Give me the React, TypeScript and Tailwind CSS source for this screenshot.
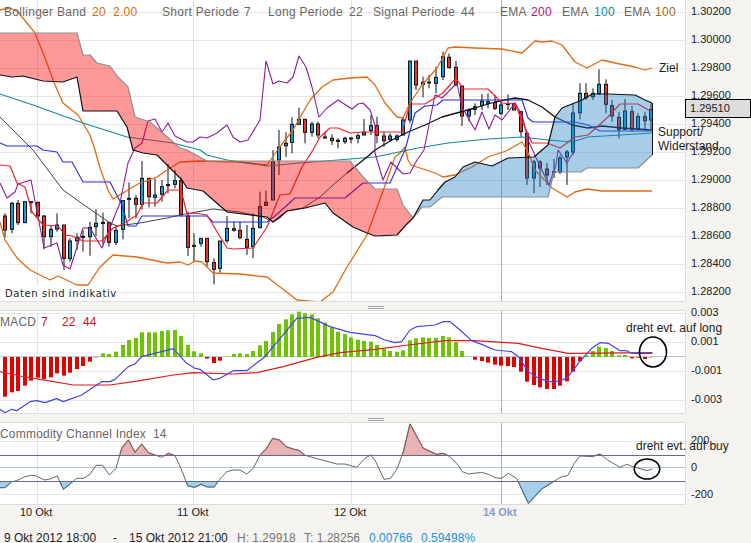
import React from "react";

type P = number[];
// points are read in 3x crops: convert to page pixels
const z = (pts: P, ox: number, oy: number): P => {
  const r: P = [];
  for (let i = 0; i < pts.length; i += 2) r.push(ox + pts[i] / 3, oy + pts[i + 1] / 3);
  return r;
};
const str = (p: P) => {
  const r: string[] = [];
  for (let i = 0; i < p.length; i += 2) r.push(`${p[i]},${p[i + 1]}`);
  return r.join(" ");
};

const upper: P = [0,10,10,8,18,12,35,33,45,58,55,85,63,103,78,115,90,135,95,150,100,168,108,190,113,199,123,193,138,184,157,177,170,168,180,162,200,161,240,162,267,165,279,148,293,130,310,100,322,87,333,80,350,78,367,77,375,85,385,103,397,117,403,118,410,103,422,85,437,68,448,48,455,47,475,48,502,49,522,53,535,41,542,42,552,41,562,45,575,62,587,68,602,60,615,63,635,67,645,70,652,68];
const lower: P = [0,222,5,240,17,258,30,270,50,280,58,276,77,285,88,285,100,267,113,255,137,257,167,263,180,262,188,265,195,261,202,262,213,273,240,274,267,277,297,300,320,302,333,292,347,267,367,235,375,213,387,180,395,157,400,153,405,147,408,160,411,165,435,173,443,177,455,175,472,167,488,157,503,152,508,150,522,142,527,150,535,170,552,188,567,197,575,192,587,189,602,191,652,191];
const emaLeft: P = [0,117,33,150,63,190,87,207,110,223,117,226,140,223,167,218,180,215,213,209,240,212,263,217,273,222,280,218,287,211,303,208,320,197,333,185,347,173];
const emaRight: P = [347,173,367,157,375,150,392,140,408,132,425,125,442,117,475,108,495,102,515,98,528,100,542,107,555,117,572,125,588,128,602,126,622,128,652,130];
const teal: P = [0,94,33,105,83,123,127,137,173,143,200,150,207,155,227,160,267,166,300,163,350,159,375,157,418,148,448,143,488,139,522,137,548,140,572,142,588,137,652,133];
const blue: P = [0,143,7,146,37,146,43,150,57,152,63,162,72,162,83,182,110,182,122,205,128,226,136,226,142,216,207,216,213,222,267,222,275,216,295,198,345,198,363,183,390,183,405,150,415,113,425,106,437,105,443,100,522,100,528,118,533,122,575,122,588,125,600,131,652,131];
const purple: P = [0,183,7,198,15,192,18,184,31,180,44,248,57,243,63,265,70,269,83,228,90,228,102,248,115,215,120,203,128,163,135,148,142,143,148,121,155,119,162,132,168,123,175,136,187,142,193,142,200,137,207,138,217,133,227,125,233,137,240,142,248,140,260,120,266,61,273,84,279,81,287,83,293,77,299,56,306,67,312,87,319,117,327,108,338,100,352,109,358,104,363,103,370,110,375,125,375,153,383,180,391,162,403,174,410,173,417,160,424,150,435,95,442,98,457,83,462,107,475,130,482,112,489,129,495,115,502,120,515,103,522,115,528,140,538,162,549,185,556,165,558,150,567,163,575,150];
const red: P = [0,165,10,166,17,183,25,187,32,212,43,225,58,226,65,235,72,236,83,241,102,241,113,228,123,224,137,215,143,203,157,203,168,190,181,190,187,214,195,213,207,215,227,248,233,249,253,248,267,227,280,195,290,194,302,167,313,150,320,137,330,128,338,128,350,133,363,132,402,132,410,104,425,104,443,93,456,78,463,89,488,89,502,103,515,104,523,123,532,143,547,143,560,148,575,137,588,135,608,117,620,104,638,104,652,112];

const cloudRed: P = [0,33,77,33,83,55,90,55,97,63,110,66,118,77,128,87,135,117,150,122,165,135,180,148,187,150,207,161,350,161,363,177,375,189,397,189,403,205,413,218];
const cloudRedBot: P = [0,75,12,77,23,76,43,81,63,82,77,77,83,111,117,111,127,127,133,150,143,153,157,155,167,165,182,180,187,188,203,191,227,212,267,217,273,222,287,211,305,208,325,203,333,213,353,227,367,233,375,236,397,235,405,226,413,218];
const cloudBlue: P = [413,218,423,200,430,200,438,190,445,182,455,177,463,167,475,162,492,166,508,158,534,157,542,150,548,145,555,117,562,108,582,100,592,94,608,94,635,95,645,100,652,103];
const cloudBlueBot: P = [413,218,422,207,430,207,442,197,548,197,554,172,581,172,587,168,638,168,652,155];
const rev = (p: P) => {
  const r: P = [];
  for (let i = p.length - 2; i >= 0; i -= 2) r.push(p[i], p[i + 1]);
  return r;
};

const R = "#e8352e", B = "#0b9fe0", K = "#111";
// colour, body top, body bottom, wick top, wick bottom (page y)
const y3 = (a: number) => 150 + a / 3;
const y1 = (a: number) => a / 3;
const c3: [string, number, number, number, number][] = [
  [R,198,240,190,262],[B,160,238,155,250],[R,160,218,150,225],[B,155,218,155,218],[K,155,156,155,190],[R,157,198,155,200],[R,198,260,195,298],[B,238,260,225,290],[B,225,237,190,245],[R,225,325,225,360],[B,273,326,265,335],[B,262,272,250,300],[K,259,261,240,305],[B,232,260,215,317],[B,220,230,178,258],[K,217,219,188,285],[R,218,277,215,290],[B,241,277,225,285],[B,152,238,150,268],[K,145,148,97,205],[R,145,163,135,205],[B,85,163,33,178],[R,85,140,85,172],[B,135,142,85,170],[B,110,133,90,155],[K,104,106,42,130],[B,92,103,60,115],[R,92,195,82,200],[R,198,292,185,318],[K,286,288,250,335],[B,265,280,265,290],[R,265,335,265,350],[R,338,358,325,403],[B,273,355,273,368],[B,235,272,198,280],[R,236,241,215,245],[R,241,263,215,268],[R,268,292,225,315],[B,235,290,190,325],[B,170,233,125,235],[R,157,166,122,166],[B,35,150,0,150],
];
const c1: [string, number, number, number, number][] = [
  [B,441,480,390,525],[B,430,437,397,471],[B,373,427,352,460],[B,358,373,323,375],[R,358,397,358,430],[B,372,397,365,410],[R,372,405,365,415],[K,411,413,395,415],[R,415,422,403,435],[K,421,423,415,445],[B,415,425,410,432],[K,414,416,412,430],[B,407,415,400,430],[R,397,405,357,405],[B,377,392,345,405],
  [R,377,406,350,430],[R,408,422,395,440],[B,408,418,400,425],[B,408,418,403,425],[B,360,405,350,405],[B,183,360,183,370],[R,183,255,183,270],[B,247,253,230,292],[K,246,248,225,265],[B,232,250,200,280],[B,170,230,155,240],[R,172,203,160,205],[R,202,255,183,258],[R,258,348,258,378],[B,332,348,325,365],[B,320,328,310,345],[B,303,316,282,330],[B,305,310,280,325],[R,308,325,285,330],[B,315,340,305,345],[K,311,313,283,330],[R,310,330,310,330],[R,335,395,335,410],[R,400,534,400,555],[B,486,534,480,579],[R,486,504,480,561],[R,507,525,489,555],[K,515,517,477,534],[B,474,516,466,522],[B,456,471,450,555],[B,339,456,309,465],[B,280,338,250,358],[R,280,293,250,300],[B,280,290,265,300],[B,253,280,208,285],[R,253,313,238,340],[R,317,348,300,365],[R,352,388,335,415],[B,333,388,297,390],[R,335,388,318,395],[B,350,388,340,392],[R,350,362,335,392],[B,328,360,310,390],
];
const candles = [
  ...c3.map(([c, a, b, d, e]) => [c, y3(a), y3(b), y3(d), y3(e)] as const),
  ...c1.map(([c, a, b, d, e]) => [c, y1(a), y1(b), y1(d), y1(e)] as const),
];

const macdBars = [290,277,273,257,242,233,237,232,220,227,218,207,198,185,172,160,162,155,135,120,114,97,97,97,93,91,90,108,135,154,160,176,189,182,170,162,160,162,153,136,123,96,72,58,43,35,40,43,55,68,82,95,102,112,119,123,125,135,147,153,155,151,121,115,112,114,114,108,112,126,153,170,179,183,188,194,197,198,201,215,245,255,262,267,267,257,244,215,184,166,153,140,144,153,166,165,175,173,177,172];
const macdBlue = [...z([0,328,15,338,35,328,50,332,90,305,110,302,135,308,170,296,190,305,245,285,305,245,330,245,345,238,385,200,405,192,425,170,520,146,560,190,585,205,600,208,640,240,660,235,700,212,740,212,795,170,890,55,930,52,990,80,1050,97,1125,107],0,300),...z([0,107,30,120,60,128,80,125,105,90,125,80,180,75,205,65,225,65,255,90,290,122,320,133,360,150,410,155,430,170,460,215,490,235,535,247,575,235,610,190,650,145,675,128,700,130,735,152,755,152,770,160,832,160],375,300)];
const macdRed = [...z([0,215,60,228,120,238,220,255,330,255,420,242,520,225,580,218,700,222,770,218,850,200,950,172,1020,158,1125,148],0,300),...z([0,148,100,135,210,122,300,122,430,130,500,145,580,160,832,158],375,300)];
const cci = [...z([0,218,15,218,35,200,50,197,75,185,95,181,110,183,133,195,150,192,172,183,190,223,230,190,250,190,270,178,288,151,308,151,328,180,348,160,365,100,385,75,405,112,425,87,445,113,485,127,505,115,525,122,543,160,563,212,583,217,603,208,622,216,642,216,662,190,680,170,700,165,720,165,740,177,760,160,780,120,800,100,818,70,838,75,858,95,880,102,898,107,915,121,1010,147,1035,147,1070,157,1095,130,1112,120,1125,135],0,415),...z([0,135,27,193,47,190,67,160,85,110,105,27,145,100,185,118,205,115,225,125,245,145,262,170,280,177,320,172,340,178,360,188,380,190,400,175,425,190,460,265,500,222,540,197,560,185,578,182,598,145,615,123,655,125,675,117,695,133,735,157,755,148,775,155,815,167,832,162],375,415)];

const cx = (i: number) => Math.round(5 + 6.53 * i);

const Grid = ({ ys, top, bottom }: { ys: number[]; top: number; bottom: number }) => (
  <g>
    {ys.map((y) => (
      <rect key={y} x={0} y={y} width={685} height={1} fill="#e6e6e6" />
    ))}
    {[38, 194, 352].map((x) => (
      <rect key={x} x={x - 1} y={top} width={1} height={bottom - top} fill="#e2e2e2" />
    ))}
  </g>
);
const BlueLine = ({ top, bottom }: { top: number; bottom: number }) => (
  <rect x={501} y={top} width={1} height={bottom - top} fill="#9fb0e4" />
);
const L = ({ p, c, w = 1 }: { p: P; c: string; w?: number }) => (
  <polyline points={str(p)} fill="none" stroke={c} strokeWidth={w} strokeLinejoin="round" />
);

const Handle = () => (
  <div className="ml-[368px] flex w-[16px] flex-col gap-[1px] pb-[1px]">
    <div className="h-[1px] bg-[#aaaaaa]" />
    <div className="h-[1px] bg-[#aaaaaa]" />
  </div>
);

const Tick = ({ children, h }: { children: React.ReactNode; h: string }) => (
  <div className={`flex items-center pl-[5px] text-[11px] leading-none text-[#222222] ${h}`}>{children}</div>
);

export default function App() {
  return (
    <div className="h-[543px] w-[751px] overflow-hidden bg-[#f5f4f0] font-['Liberation_Sans',sans-serif]">
      {/* main panel */}
      <div className="flex h-[302px]">
        <div className="relative h-[302px] w-[686px] border-r border-b border-[#dcdcdc] bg-white">
          <svg width={685} height={301} viewBox="0 0 685 301" className="block">
            <Grid ys={[12, 40, 68, 96, 124, 152, 180, 208, 236, 264, 292]} top={0} bottom={301} />
            <BlueLine top={0} bottom={301} />
            {candles.map(([c, a, b, d, e], i) => (
              <g key={i}>
                <rect x={cx(i) - 0.5} y={d} width={1} height={e - d} fill="#111" />
                <rect x={cx(i) - 1.5} y={a} width={3} height={Math.max(b - a, 1)} fill={c as string} stroke="#111" strokeWidth={1} />
              </g>
            ))}
            <L p={upper} c="#e26a12" w={1.3} />
            <L p={lower} c="#e26a12" w={1.3} />
            <L p={teal} c="#12899a" w={1.1} />
            <L p={emaLeft} c="#444444" w={1} />
            <L p={emaRight} c="#111111" w={1.3} />
            <L p={purple} c="#8c1f96" w={1.1} />
            <L p={blue} c="#2a2af0" w={1.1} />
            <L p={red} c="#f5202a" w={1.2} />
            <polygon points={str([...cloudRed, ...rev(cloudRedBot)])} fill="rgba(255,0,0,0.4)" />
            <polygon points={str([...cloudBlue, ...rev(cloudBlueBot)])} fill="rgba(35,130,197,0.4)" />
            <L p={cloudRed} c="#8e8e8e" w={1.2} />
            <L p={cloudBlueBot} c="#8e8e8e" w={1.2} />
            <L p={cloudRedBot} c="#111111" w={1.2} />
            <L p={cloudBlue} c="#111111" w={1.2} />
            <rect x={652} y={103} width={1} height={52} fill="#111" />
          </svg>
          <div className="absolute top-[5px] left-[4px] flex whitespace-nowrap text-[12px] leading-[15px] tracking-[0.3px] text-[#666666]">
            <span className="w-[88px]">Bollinger Band</span>
            <span className="w-[21px] text-[#df6a0c]">20</span>
            <span className="w-[49px] text-[#df6a0c]">2.00</span>
            <span className="w-[82px]">Short Periode</span>
            <span className="w-[24px]">7</span>
            <span className="w-[81px]">Long Periode</span>
            <span className="w-[24px]">22</span>
            <span className="w-[88px]">Signal Periode</span>
            <span className="w-[39px]">44</span>
            <span className="w-[31px]">EMA</span>
            <span className="w-[31px] text-[#b8126e]">200</span>
            <span className="w-[32px]">EMA</span>
            <span className="w-[30px] text-[#0f8a9a]">100</span>
            <span className="w-[31px]">EMA</span>
            <span className="text-[#9a6a1e]">100</span>
          </div>
          <div className="absolute top-[286px] left-0 w-[117px] bg-white pl-[5px] font-['DejaVu_Sans',sans-serif] text-[10px] leading-[15px] tracking-[0.6px] whitespace-nowrap text-[#222222]">
            Daten sind indikativ
          </div>
          <div className="absolute top-[61px] left-[659px] text-[12px] leading-[14px] text-[#222222]">Ziel</div>
          <div className="absolute top-[125px] left-[658px] text-[12px] leading-[14px] text-[#222222]">
            Support/
            <br />
            Widerstand
          </div>
        </div>
        <div className="relative w-[65px]">
          <div className="-mt-[3px]">
            {["1.30200", "1.30000", "1.29800", "1.29600", "1.29400", "1.29200", "1.29000", "1.28800", "1.28600", "1.28400", "1.28200"].map((t) => (
              <Tick key={t} h="h-[28px]">
                {t}
              </Tick>
            ))}
          </div>
          <div className="absolute top-[99px] left-[-1px] flex h-[19px] w-[66px] items-center border border-black bg-[#dddddd] pl-[4px] text-[11px] text-[#222222]">
            1.29510
          </div>
        </div>
      </div>

      {/* separator */}
      <div className="flex h-[8px] items-end">
        <Handle />
      </div>

      {/* MACD */}
      <div className="flex h-[104px]">
        <div className="relative h-[104px] w-[686px] border-t border-r border-b border-[#dcdcdc] bg-white">
          <svg width={685} height={102} viewBox="0 311 685 102" className="block">
            <Grid ys={[313, 342, 371, 400]} top={313} bottom={413} />
            <rect x={0} y={356} width={685} height={1} fill="#b4c6da" />
            <BlueLine top={311} bottom={413} />
            {macdBars.map((v, i) => {
              const y = 300 + v / 3;
              const up = y < 357;
              return (
                <rect
                  key={i}
                  x={cx(i) - 2}
                  y={up ? y : 357}
                  width={4}
                  height={Math.abs(y - 357)}
                  fill={up ? "#6ec400" : "#e00000"}
                />
              );
            })}
            <L p={macdRed} c="#dd1b1b" w={1.2} />
            <L p={macdBlue} c="#4545e6" w={1.2} />
            <ellipse cx={653} cy={352} rx={13.5} ry={15} fill="none" stroke="#000" strokeWidth={1.6} />
          </svg>
          <div className="absolute top-[4px] left-0 flex text-[12px] leading-[15px] tracking-[0.2px] text-[#666666]">
            <span className="w-[41px]">MACD</span>
            <span className="w-[21px] text-[#d01010]">7</span>
            <span className="w-[21px] text-[#d01010]">22</span>
            <span className="text-[#d01010]">44</span>
          </div>
          <div className="absolute top-[10px] left-[626px] whitespace-nowrap text-[12px] leading-[14px] text-[#222222]">
            dreht evt. auf long
          </div>
        </div>
        <div className="w-[65px]">
          <div className="-mt-[12px]">
            {["0.003", "0.001", "-0.001", "-0.003"].map((t) => (
              <Tick key={t} h="h-[29px]">
                {t}
              </Tick>
            ))}
          </div>
        </div>
      </div>

      {/* separator */}
      <div className="flex h-[8px] items-end">
        <Handle />
      </div>

      {/* CCI */}
      <div className="flex h-[83px]">
        <div className="relative h-[83px] w-[686px] border-t border-r border-b border-[#dcdcdc] bg-white">
          <svg width={685} height={81} viewBox="0 423 685 81" className="block">
            <defs>
              <clipPath id="cciTop">
                <rect x={0} y={423} width={685} height={32} />
              </clipPath>
              <clipPath id="cciBot">
                <rect x={0} y={481} width={685} height={24} />
              </clipPath>
            </defs>
            <Grid ys={[441, 494]} top={423} bottom={504} />
            <rect x={0} y={467} width={685} height={1} fill="#b4c6da" />
            <BlueLine top={423} bottom={504} />
            <g clipPath="url(#cciTop)">
              <polygon points={str([0, 455, ...cci, 652, 455])} fill="#e9b3b3" />
              <L p={cci} c="#d96a6a" w={1.2} />
            </g>
            <g clipPath="url(#cciBot)">
              <polygon points={str([0, 481, ...cci, 652, 481])} fill="#a8cfea" />
              <L p={cci} c="#5aa3dc" w={1.2} />
            </g>
            <L p={cci} c="#666666" />
            <rect x={0} y={455} width={685} height={1} fill="#68688e" />
            <rect x={0} y={481} width={685} height={1} fill="#68688e" />
            <ellipse cx={647} cy={469} rx={12.7} ry={10} fill="none" stroke="#000" strokeWidth={1.6} />
          </svg>
          <div className="absolute top-[4px] left-0 flex whitespace-nowrap text-[12px] leading-[15px] tracking-[0.2px] text-[#666666]">
            <span className="w-[153px]">Commodity Channel Index</span>
            <span>14</span>
          </div>
          <div className="absolute top-[16px] left-[636px] whitespace-nowrap text-[12px] leading-[14px] text-[#222222]">
            dreht evt. auf buy
          </div>
        </div>
        <div className="w-[65px] pt-[5px]">
          {["200", "0", "-200"].map((t) => (
            <Tick key={t} h="h-[27px]">
              {t}
            </Tick>
          ))}
        </div>
      </div>

      {/* time axis */}
      <div className="flex h-[14px] items-center pl-[20px] text-[11px] leading-none text-[#222222]">
        <span className="w-[157px]">10 Okt</span>
        <span className="w-[157px]">11 Okt</span>
        <span className="w-[149px]">12 Okt</span>
        <span className="font-bold text-[#8a9ad2]">14 Okt</span>
      </div>

      {/* footer */}
      <div className="flex pt-[12px] pl-[4px] text-[12px] leading-[15px] whitespace-nowrap">
        <span className="w-[109px] text-[#222222]">9 Okt 2012 18:00</span>
        <span className="w-[16px] text-[#222222]">-</span>
        <span className="w-[108px] text-[#222222]">15 Okt 2012 21:00</span>
        <span className="w-[67px] text-[#777777]">H: 1.29918</span>
        <span className="w-[65px] text-[#777777]">T: 1.28256</span>
        <span className="w-[52px] text-[#1a96d8]">0.00766</span>
        <span className="text-[#1a96d8]">0.59498%</span>
      </div>
    </div>
  );
}
